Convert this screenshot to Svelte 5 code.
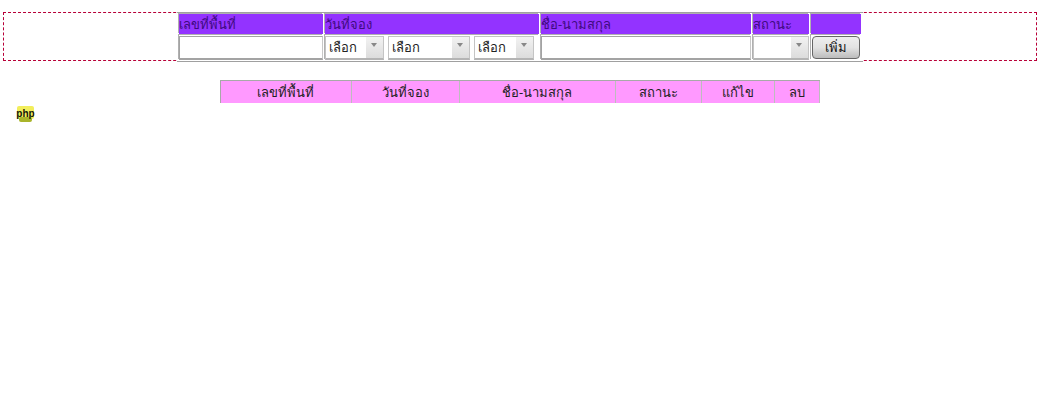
<script>
  const days = ["เลือก"];
  const cols = [
    { label: "เลขที่พื้นที่", w: 131 },
    { label: "วันที่จอง", w: 108 },
    { label: "ชื่อ-นามสกุล", w: 156 },
    { label: "สถานะ", w: 86 },
    { label: "แก้ไข", w: 73 },
    { label: "ลบ", w: 45 }
  ];
</script>

<div class="page">
  <form class="add-form">
    <table class="add">
      <thead>
        <tr>
          <th class="c1">เลขที่พื้นที่</th>
          <th class="c2">วันที่จอง</th>
          <th class="c3">ชื่อ-นามสกุล</th>
          <th class="c4">สถานะ</th>
          <th class="c5"></th>
        </tr>
      </thead>
      <tbody>
        <tr>
          <td><input type="text" class="text" /></td>
          <td>
            <div class="dates">
              <div class="select s59"><span>{days[0]}</span><i></i></div>
              <div class="select s82"><span>{days[0]}</span><i></i></div>
              <div class="select s60"><span>{days[0]}</span><i></i></div>
            </div>
          </td>
          <td><input type="text" class="text" /></td>
          <td><div class="select s56"><span></span><i></i></div></td>
          <td><button type="button" class="add-btn">เพิ่ม</button></td>
        </tr>
      </tbody>
    </table>
  </form>

  <table class="list">
    <tbody>
      <tr>
        {#each cols as col}
          <td style="width: {col.w}px">{col.label}</td>
        {/each}
      </tr>
    </tbody>
  </table>

  <svg class="php" width="20" height="18" viewBox="0 0 20 18">
    <rect x="1" y="1" width="17" height="13" rx="2" fill="#f2ee5c" />
    <rect x="3" y="12" width="13" height="5" rx="2" fill="#a9b42a" />
    <text x="9.5" y="11.5" text-anchor="middle">php</text>
  </svg>
</div>

<style>
  :global(body) {
    margin: 0;
    background: #fff;
  }

  .page {
    width: 1042px;
    height: 400px;
    overflow: hidden;
    font-family: "Noto Sans", "Liberation Sans", sans-serif;
    font-size: 13px;
    color: #000;
  }

  .add-form {
    box-sizing: border-box;
    width: 1034px;
    height: 49px;
    margin: 12px 0 0 3px;
    border: 1px dashed #b80038;
  }

  table {
    border-collapse: separate;
    background: #fff;
  }

  .add {
    width: 686px;
    margin: -1px 0 0 173px;
    border-top: 1px solid #a0a0a0;
    border-bottom: 1px solid #a0a0a0;
    border-spacing: 2px 1px;
    table-layout: fixed;
    position: relative;
  }

  .add th,
  .add td {
    box-shadow: -1px -1px 0 #b0b0b0;
  }

  .add th {
    background: #9333ff;
    color: #3f0a80;
    font-weight: normal;
    text-align: left;
    height: 20px;
    padding: 0;
    line-height: 20px;
    white-space: nowrap;
  }

  .add td {
    padding: 0;
    height: 25px;
  }

  .c1 { width: 144px; }
  .c2 { width: 214px; }
  .c3 { width: 210px; }
  .c4 { width: 56px; }
  .c5 { width: 50px; }

  .text {
    display: block;
    box-sizing: border-box;
    height: 24px;
    width: 100%;
    margin: 0;
    padding: 0 2px;
    border: 1px solid #a3a3a3;
    border-right-color: #c8c8c8;
    border-bottom: 2px solid #a3a3a3;
    background: #fff;
  }

  .dates {
    display: flex;
    gap: 4px;
  }

  .select {
    box-sizing: border-box;
    display: flex;
    justify-content: space-between;
    height: 24px;
    border: 1px solid #c4c4c4;
    border-bottom: 2px solid #b4b4b4;
    background: #fff;
    line-height: 21px;
    font-size: 13px;
    color: #222;
  }

  .select span {
    padding-left: 3px;
  }

  .select i {
    width: 17px;
    background: linear-gradient(#f2f2f2, #dcdcdc);
    position: relative;
  }

  .select i::after {
    content: "";
    position: absolute;
    left: 5px;
    top: 6px;
    border: 3px solid transparent;
    border-top: 4px solid #888;
  }

  .s59 { width: 59px; }
  .s82 { width: 82px; }
  .s60 { width: 60px; }
  .s56 { width: 56px; }

  .add-btn {
    display: block;
    box-sizing: border-box;
    width: 48px;
    height: 23px;
    margin: 0 0 0 1px;
    padding: 0;
    border: 1px solid #666;
    border-radius: 4px;
    background: linear-gradient(#eeeeee, #e2e2e2 50%, #bcbcbc);
    font: inherit;
    color: #111;
  }

  .list {
    width: 600px;
    margin: 19px 0 0 220px;
    border: 1px solid #a8a8a8;
    border-width: 1px 0 0 1px;
    border-spacing: 0;
    table-layout: fixed;
  }

  .list td {
    background: #ff99ff;
    color: #222;
    text-align: center;
    height: 22px;
    padding: 0 1px 0 0;
    border-right: 1px solid #bdbdbd;
    line-height: 21px;
    box-sizing: border-box;
  }

  .php {
    display: block;
    margin: 2px 0 0 16px;
  }

  .php text {
    font-family: "Liberation Sans", sans-serif;
    font-size: 10px;
    font-weight: bold;
    fill: #14140a;
  }
</style>
